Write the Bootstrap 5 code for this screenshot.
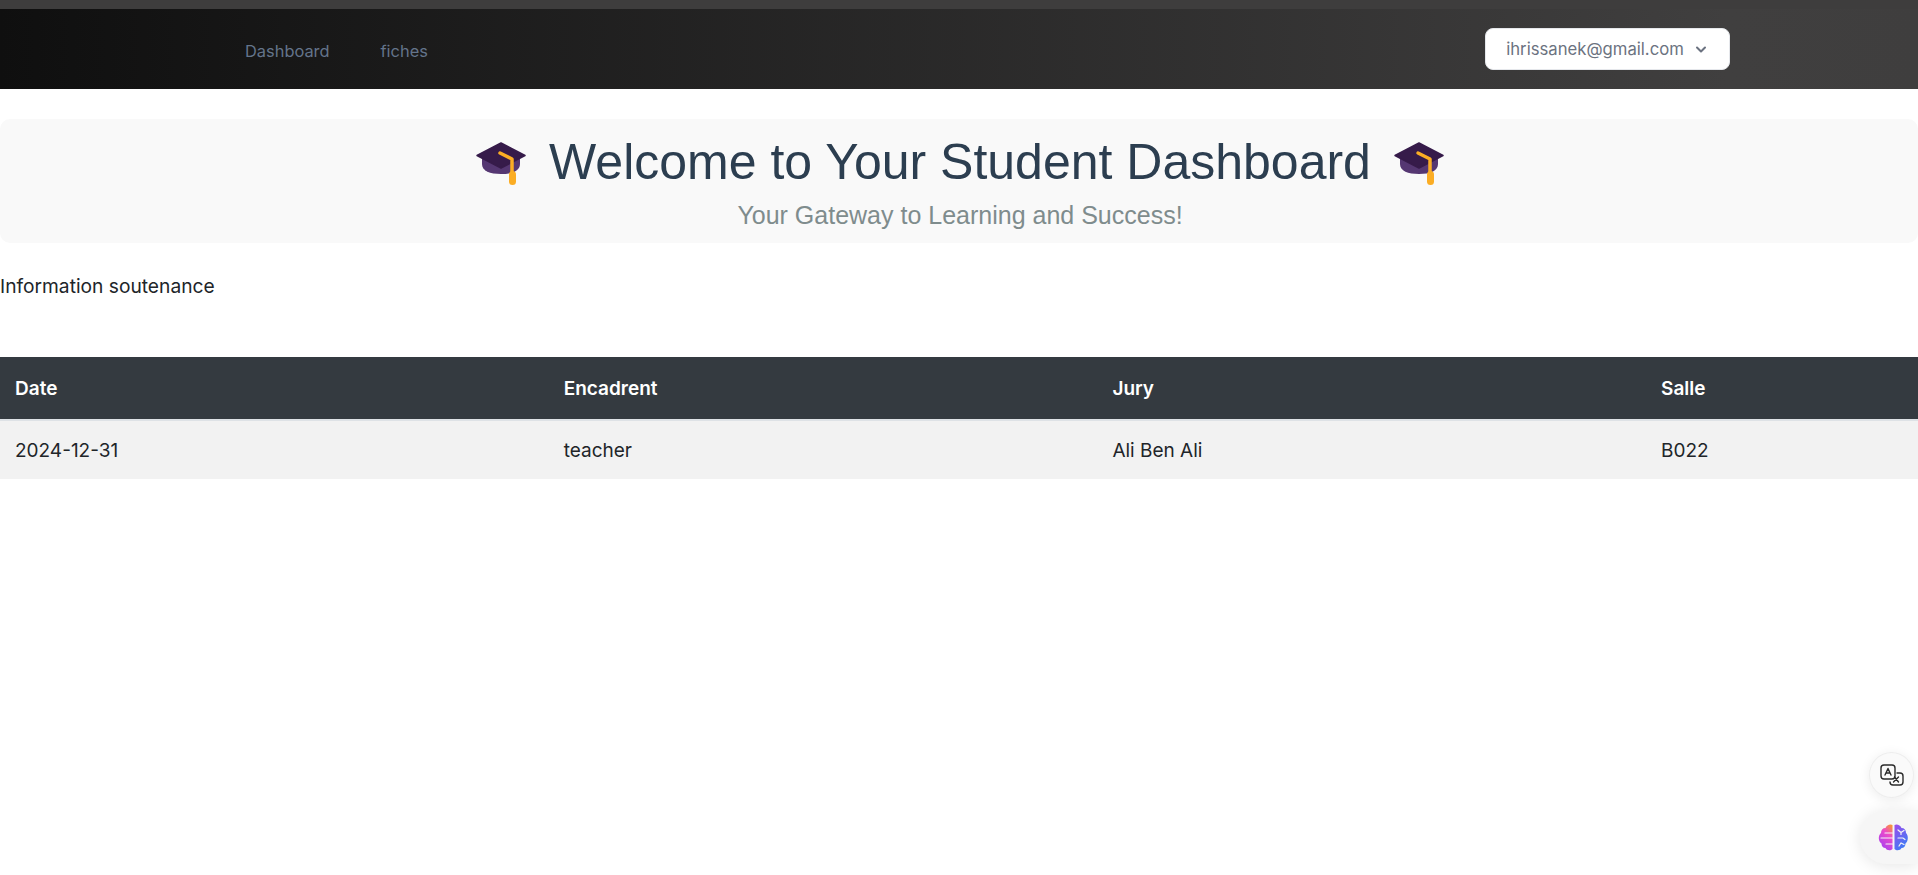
<!DOCTYPE html>
<html lang="en">
<head>
<meta charset="utf-8">
<title>Student Dashboard</title>
<link href="https://cdn.jsdelivr.net/npm/bootstrap@5.3.0/dist/css/bootstrap.min.css" rel="stylesheet">
<style>
html,body{height:100%}
body{font-family:Inter,"Noto Sans",sans-serif;background:#fff;color:#212529;font-size:16px;overflow:hidden}
.top-strip{height:9px;background:#3e3d3d}
.main-bar{height:80px;background:linear-gradient(90deg,#0f0f0f 0%,#403f3f 90%,#3f3e3e 100%);padding:0 188px 0 245px}
.nav-links{gap:51px;padding-top:3px}
.main-bar .nav-link{color:#64748b;font-size:16.4px;padding:0;line-height:20px}
.user-btn{height:42px;width:245px;background:#fff;border:1px solid #e5e7eb;border-radius:8px;color:#6b7280;font-size:16.7px;padding:2px 2px 0 0;gap:11px;font-family:Inter,sans-serif}
.user-btn:hover{background:#fff;color:#6b7280}
.hero-box{margin-top:30px;height:124px;background:#f9f9f9;border-radius:10px;color:#2c3e50;font-family:"Liberation Sans",Arial,sans-serif;padding:12px 0 0 2px}
.hero-title{font-size:50px;line-height:62px;font-weight:400;margin:0;gap:23px;color:#2c3e50}
.cap-icon{margin-top:4px}
.hero-sub{font-size:25px;line-height:30px;color:#7f8c8d;margin:7px 0 0}
.info-line{margin:31px 0 0;font-size:19.2px;line-height:24px;color:#212529;font-family:Inter,sans-serif}
.data-wrap{margin-top:59px}
.data-table{table-layout:fixed;margin:0;width:100%;font-size:19px;border:0}
.data-table th{background:#343a40;color:#fff;padding:2px 15px 0;height:63px;font-weight:600;vertical-align:middle;border:0;border-bottom:2px solid #dee2e6;box-shadow:none}
.data-table td{background:#f2f2f2;color:#212529;padding:2px 15px 0;height:59px;vertical-align:middle;border:0;box-shadow:none}
.data-table th.wide-col{width:548.7px}
.float-translate{position:fixed;right:4px;bottom:77px;width:45px;height:46px;border-radius:50%;background:#fafafa;border:1px solid #eee;box-shadow:0 2px 12px rgba(0,0,0,.08)}
.float-brain{position:fixed;right:0;bottom:11px;width:58px;height:54px;border-radius:27px 0 0 27px;background:#f6f6f6;box-shadow:0 2px 16px rgba(0,0,0,.1)}
.brain-icon{margin-left:18px}
</style>
</head>
<body>
<div class="top-strip"></div>
<nav class="main-bar d-flex align-items-center justify-content-between">
  <ul class="nav nav-links align-items-center">
    <li class="nav-item"><a class="nav-link" href="#">Dashboard</a></li>
    <li class="nav-item"><a class="nav-link" href="#">fiches</a></li>
  </ul>
  <button type="button" class="btn user-btn d-flex align-items-center justify-content-center">
    ihrissanek@gmail.com
    <svg width="12" height="8" viewBox="0 0 12 8" fill="none" stroke="#6b7280" stroke-width="2" stroke-linecap="round" stroke-linejoin="round" aria-hidden="true"><path d="M2 1.5 6 5.5 10 1.5"/></svg>
  </button>
</nav>

<section class="hero-box text-center">
  <h1 class="hero-title d-flex justify-content-center align-items-center">
    <svg class="cap-icon" width="50" height="44" viewBox="0 0 50 44" aria-hidden="true"><path d="M6 14h38v8c0 7-8 10-19 10S6 29 6 22z" fill="#553772"/><path d="M25 1 49 13.500 25 26 1 13.500z" fill="#361b4a" stroke="#361b4a" stroke-width="1.500" stroke-linejoin="round"/><path d="M24 11 36 17v14" fill="none" stroke="#fbad24" stroke-width="3.500" stroke-linecap="round" stroke-linejoin="round"/><rect x="33" y="29" width="7" height="14" rx="3.500" fill="#fbad24"/></svg>
    <span>Welcome to Your Student Dashboard</span>
    <svg class="cap-icon" width="50" height="44" viewBox="0 0 50 44" aria-hidden="true"><path d="M6 14h38v8c0 7-8 10-19 10S6 29 6 22z" fill="#553772"/><path d="M25 1 49 13.500 25 26 1 13.500z" fill="#361b4a" stroke="#361b4a" stroke-width="1.500" stroke-linejoin="round"/><path d="M24 11 36 17v14" fill="none" stroke="#fbad24" stroke-width="3.500" stroke-linecap="round" stroke-linejoin="round"/><rect x="33" y="29" width="7" height="14" rx="3.500" fill="#fbad24"/></svg>
  </h1>
  <p class="hero-sub">Your Gateway to Learning and Success!</p>
</section>

<p class="info-line">Information soutenance</p>

<div class="data-wrap">
  <table class="table data-table">
    <thead>
      <tr><th class="wide-col">Date</th><th class="wide-col">Encadrent</th><th class="wide-col">Jury</th><th>Salle</th></tr>
    </thead>
    <tbody>
      <tr><td>2024-12-31</td><td>teacher</td><td>Ali Ben Ali</td><td>B022</td></tr>
    </tbody>
  </table>
</div>

<div class="float-translate d-flex align-items-center justify-content-center">
  <svg width="24" height="22" viewBox="0 0 24 22" fill="none" stroke="#2b2b2b" stroke-width="1.4" stroke-linecap="round" stroke-linejoin="round" aria-hidden="true"><rect x="1" y="1" width="14" height="14" rx="3" fill="#fafafa"/><path d="M5 11 8 4.500 11 11M6 9h4"/><path d="M17 9h3a3 3 0 0 1 3 3v6a3 3 0 0 1-3 3h-7a3 3 0 0 1-3-3"/><path d="M14.500 13l4 5M18.500 13l-5 5"/></svg>
</div>
<div class="float-brain d-flex align-items-center">
  <svg class="brain-icon" width="31" height="28" viewBox="0 0 31 28" aria-hidden="true">
    <defs><linearGradient id="bl" x1="0.800" y1="0" x2="0.300" y2="1"><stop offset="0" stop-color="#f7933c"/><stop offset=".35" stop-color="#ee4bc8"/><stop offset="1" stop-color="#a53ff2"/></linearGradient>
    <linearGradient id="br" x1="0" y1="0" x2="0.500" y2="1"><stop offset="0" stop-color="#a04cec"/><stop offset="1" stop-color="#3f7bf5"/></linearGradient></defs>
    <path d="M14.500 2v24c-2 2-6 1.500-7-1-2.500 0-4-2-4-4.500C0 18.500 0 12 3 10c0-3 1.500-5 4.500-5 1-3 5-4.500 7-3z" fill="url(#bl)"/>
    <path d="M16.500 2v24c2 2 6 1.500 7-1 2.500 0 4-2 4-4.500 3-2 3-8.500.500-10.500 0-3-1.500-5-4.500-5-1-3-5-4.500-7-3z" fill="url(#br)"/>
    <path d="M14.500 10H7M14.500 15H3M14.500 21H8M20 7l3 2.500 3-2M23 9.500v2M20 15h5l2 1.500M23 20l-2 3M23 20l3 1.500" stroke="#f6f6f6" stroke-width="1.200" fill="none" stroke-linecap="round"/>
  </svg>
</div>
<script src="https://cdn.jsdelivr.net/npm/bootstrap@5.3.0/dist/js/bootstrap.bundle.min.js"></script>
</body>
</html>
